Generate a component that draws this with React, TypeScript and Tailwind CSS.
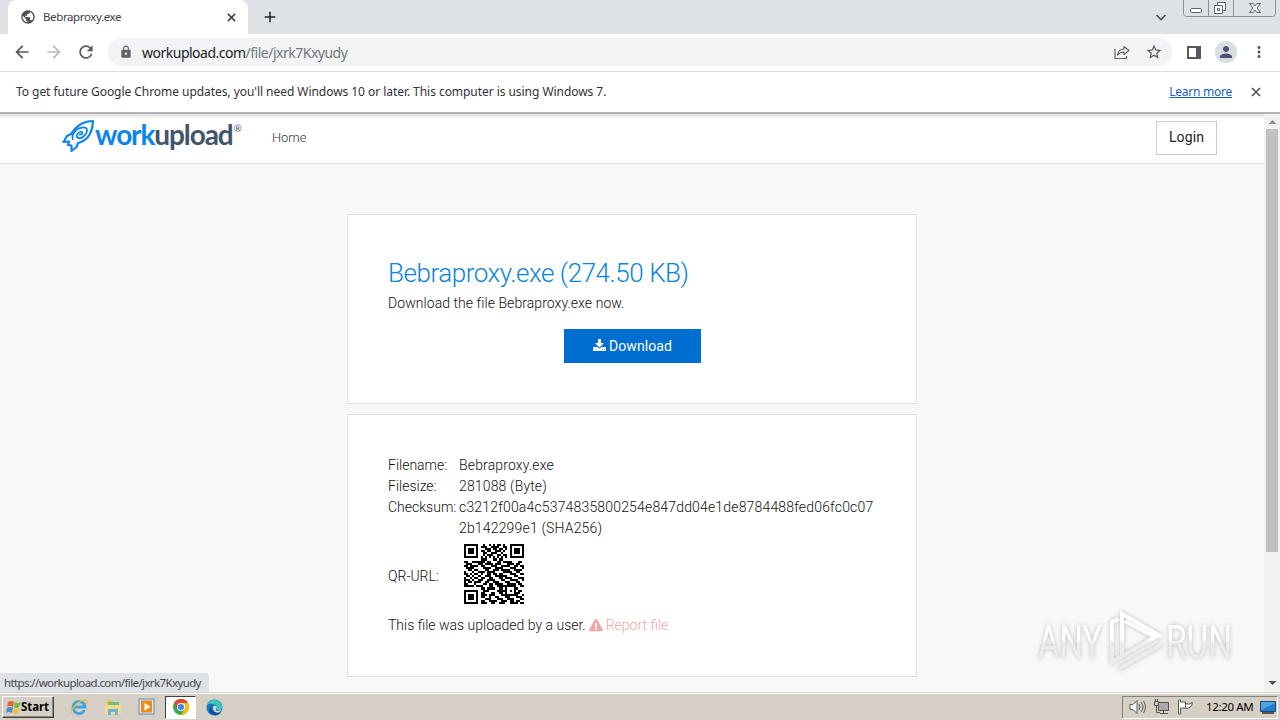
import type { ReactNode } from "react";
import {
  MdAdd,
  MdArrowBack,
  MdArrowForward,
  MdLock,
  MdMoreVert,
  MdPerson,
  MdPublic,
  MdRefresh,
  MdStarBorder,
} from "react-icons/md";
import { FaExclamationTriangle } from "react-icons/fa";

const URL_HOST = "workupload.com";
const URL_PATH = "/file/jxrk7Kxyudy";

const QR_ROWS = [
  "11111110010010101101001111111",
  "10000010111001111001101000001",
  "10111010001110110110101011101",
  "10111010110110011101001011101",
  "10111010011001110010001011101",
  "10000010010111001101101000001",
  "11111110101010101010101111111",
  "00000000111000110110000000000",
  "11001111110110001101111000110",
  "01110001101111011100011101100",
  "11011110110001110011110011011",
  "01111000011110011110001110001",
  "00110110001100111011110011110",
  "10001001110111100001111001100",
  "11010110100110110110001110011",
  "01101001001110011111100011000",
  "10010110110011000110111000111",
  "11101001100111100011001111001",
  "10110111001100111000110001100",
  "11000100011011011110011110110",
  "11111011100011001111111110011",
  "00000000110111100110100011000",
  "11111110011100001111101010110",
  "10000010110001100110100011100",
  "10111010111011100011111111001",
  "10111010110010011000110001110",
  "10111010001110001110011100011",
  "10000010110011110011101101100",
  "11111110111001100111001111011",
];

function QrCode() {
  return (
    <svg viewBox="0 0 29 29" className="mb-[7px] ml-[5px] h-[60px] w-[60px]" shapeRendering="crispEdges">
      {QR_ROWS.map((row, y) =>
        row.split("").map((cell, x) =>
          cell === "1" ? <rect key={`${x}-${y}`} x={x} y={y} width="1" height="1" /> : null
        )
      )}
    </svg>
  );
}

function CloseIcon({ className }: { className: string }) {
  return (
    <svg viewBox="0 0 10 10" className={className} stroke="currentColor" strokeWidth="1.7">
      <path d="M1 1l8 8M9 1L1 9" />
    </svg>
  );
}

function WindowControls() {
  return (
    <svg className="mr-[3px] h-[17px] w-[94px] self-start" viewBox="0 0 94 17" fill="none">
      <path d="M.5 0v13.5q0 3 3 3h86q3 0 3-3V0M25.5 0v16M50.5 0v16" stroke="#8b9099" />
      <rect x="7.5" y="8.5" width="11" height="4" rx="1" fill="#fff" stroke="#5d626b" />
      <path d="M34.5 2.5h8v8h-8z" fill="#fff" stroke="#5d626b" />
      <path d="M31.5 5.5h8v8h-8z" fill="#fff" stroke="#5d626b" />
      <path d="M34.5 8.5h2v2h-2z" stroke="#5d626b" />
      <path
        d="M66.500 3.500h3.500l2 2.500 2-2.500h3.500l-3.500 4.500 3.500 4.500H74l-2-2.500-2 2.500h-3.500L70 8z"
        fill="#fff"
        stroke="#5d626b"
      />
    </svg>
  );
}

function TabStrip() {
  return (
    <div className="flex h-[34px] items-center bg-[#dee1e6]">
      <div className="ml-2 flex h-full w-60 items-center rounded-t-lg bg-white pr-3 pl-3">
        <MdPublic className="h-4 w-4 text-[#4d5156]" />
        <span className="ml-[7px] flex-1 text-[11.5px] tracking-[-0.38px] text-[#3c4043]">
          Bebraproxy.exe
        </span>
        <CloseIcon className="h-[9px] w-[9px] text-[#3c4043]" />
      </div>
      <MdAdd className="ml-[13px] h-[18px] w-[18px] text-[#202124]" />
      <svg className="mr-4 ml-auto h-2.5 w-3" viewBox="0 0 12 10" fill="none">
        <path d="M1.5 3 6 7.5 10.5 3" stroke="#4d5156" strokeWidth="1.7" />
      </svg>
      <WindowControls />
    </div>
  );
}

function Toolbar() {
  return (
    <div className="flex h-[38px] items-center border-b border-[#dadce0] bg-white pb-px">
      <MdArrowBack className="ml-3 h-5 w-5 text-[#55585c]" />
      <MdArrowForward className="ml-3 h-5 w-5 text-[#b8babd]" />
      <MdRefresh className="ml-3 h-5 w-5 text-[#55585c]" />
      <div className="ml-3 flex h-7 w-[1064px] items-center rounded-full bg-[#f1f3f4] pr-[9px] pl-[11px]">
        <MdLock className="h-3.5 w-3.5 text-[#5f6368]" />
        <span className="ml-[9px] flex-1 text-[14px] tracking-[-0.5px] text-[#202124]">
          {URL_HOST}
          <span className="text-[#74787d]">{URL_PATH}</span>
        </span>
        <svg className="mr-[15px] h-4 w-4" viewBox="0 0 16 16" fill="none" stroke="#5f6368" strokeWidth="1.2">
          <path d="M1 5v9.500h11.500V12" />
          <path d="M10 2.500 15 6.500 10 10.500V8Q6 8 3.500 11 4 5.500 10 5z" strokeLinejoin="round" />
        </svg>
        <MdStarBorder className="h-[18px] w-[18px] text-[#55585c]" />
      </div>
      <svg className="ml-[15px] h-[13px] w-3.5" viewBox="0 0 14 13">
        <path d="M1 1h12v11H1z" fill="#fff" stroke="#55585c" strokeWidth="2" />
        <path d="M9 0h5v13H9z" fill="#55585c" />
      </svg>
      <div className="ml-3.5 flex h-[22px] w-[22px] items-center justify-center rounded-full bg-[#dadde2]">
        <MdPerson className="h-[18px] w-[18px] text-[#4a5574]" />
      </div>
      <MdMoreVert className="ml-3 h-[18px] w-5 text-[#55585c]" />
    </div>
  );
}

function UpdateBar() {
  return (
    <div className="flex h-10 items-center bg-white pr-[19px] pl-4 text-[12px] text-[#303236]">
      <span className="flex-1 tracking-[-0.05px]">
        To get future Google Chrome updates, you'll need Windows 10 or later. This computer is using Windows 7.
      </span>
      <a className="tracking-[-0.25px] text-[#1a5fc8] underline">Learn more</a>
      <CloseIcon className="ml-[19px] h-2.5 w-2.5 text-[#55585c]" />
    </div>
  );
}

function Logo() {
  return (
    <div className="flex items-center pb-1">
      <svg className="h-[34px] w-[33px]" viewBox="0 0 33 34" fill="none" stroke="#0b84ee" strokeWidth="2.2">
        <path
          d="M31 2Q20 2 13 10L9 15 5 17 1.500 23 7 22.500 6 26 9.500 26.500V32L14.500 28 16 24Q24 22 28 15 31 9 31 2Z"
          strokeLinejoin="round"
        />
        <path d="M11 21Q9 16 14 11 20 7 24 9 27 12 22 17 18 21 15 18 14 15 18 13 21 12 20 15L17 16" strokeWidth="1.8" />
      </svg>
      <div className="flex pb-1 font-[Lato] text-[28px] leading-[32px] font-bold tracking-[-1.1px] text-[#0b84ee]">
        work<span className="text-[#41566a]">upload</span>
      </div>
      <span className="mb-3.5 ml-px font-[Lato] text-[10px] text-[#41566a]">®</span>
    </div>
  );
}

function SiteHeader() {
  return (
    <header className="flex h-[50px] items-center border-b border-[#ddd] bg-linear-to-b from-[#dcdcdc] to-white to-[5px] pr-[47px] pb-[2px] pl-[62px]">
      <div className="w-[210px]">
        <Logo />
      </div>
      <a className="flex-1 text-[13px] font-light tracking-[-0.1px] text-[#333]">Home</a>
      <button className="h-[34px] w-[61px] border border-[#ccc] bg-white text-[14px] tracking-[0.1px] text-[#222]">
        Login
      </button>
    </header>
  );
}

function DownloadIcon() {
  return (
    <svg viewBox="0 0 1664 1664" className="mb-px h-[13px] w-[13px]" fill="currentColor">
      <path d="M1280 1344q0-26-19-45t-45-19-45 19-19 45 19 45 45 19 45-19 19-45zm256 0q0-26-19-45t-45-19-45 19-19 45 19 45 45 19 45-19 19-45zm128-224v320q0 40-28 68t-68 28H96q-40 0-68-28t-28-68v-320q0-40 28-68t68-28h465l135 136q58 56 136 56t136-56l136-136h464q40 0 68 28t28 68zm-325-569q17 41-14 70l-448 448q-18 19-45 19t-45-19L339 621q-31-29-14-70 17-39 59-39h256V64q0-26 19-45t45-19h256q26 0 45 19t19 45v448h256q42 0 59 39z" />
    </svg>
  );
}

function Card({ children }: { children: ReactNode }) {
  return <section className="w-[570px] border border-[#e0e0e0] bg-white px-10">{children}</section>;
}

function FileRow({ label, children }: { label: string; children: ReactNode }) {
  return (
    <tr>
      <td className="w-[71px] whitespace-nowrap">{label}</td>
      <td className="tracking-[0.15px]">{children}</td>
    </tr>
  );
}

function Watermark() {
  return (
    <svg
      className="absolute right-[25px] bottom-5 h-[70px] w-[205px] drop-shadow-[0_0_2px_#bbb]"
      viewBox="0 0 205 70"
      fill="url(#mark)"
    >
      <defs>
        <linearGradient id="mark" gradientUnits="userSpaceOnUse" x1="0" y1="20" x2="0" y2="58">
          <stop offset="0.45" stopColor="#fff" />
          <stop offset="0.55" stopColor="#ececec" />
        </linearGradient>
      </defs>
      <g fontFamily="Roboto" fontSize="47">
        <text x="4" y="56" textLength="64" lengthAdjust="spacingAndGlyphs">
          ANY
        </text>
        <text x="132" y="56" textLength="66" lengthAdjust="spacingAndGlyphs">
          RUN
        </text>
      </g>
      <g fill="none" stroke="url(#mark)" strokeWidth="4">
        <path d="M88 53V12L128 35" />
        <path d="M85 17 78 20V60L121 35 91 19" />
        <path d="M85 67 128 42" />
      </g>
    </svg>
  );
}

function FilePage() {
  return (
    <main className="relative flex flex-1 flex-col overflow-hidden bg-[#f8f8f8] font-[Roboto]">
      <SiteHeader />
      <div className="mt-[50px] flex flex-col items-center gap-2.5 text-[14px] leading-[21px] font-light text-[#111]">
        <Card>
          <div className="flex h-[188px] flex-col pt-[43px]">
            <h1 className="text-[26px] leading-[30px] tracking-[-0.46px] text-[#0a84e0]">
              Bebraproxy.exe (274.50 KB)
            </h1>
            <p className="mt-[5px] tracking-[0.06px]">Download the file Bebraproxy.exe now.</p>
            <button className="mt-[15px] ml-44 flex h-[34px] w-[137px] items-center justify-center gap-[3px] bg-[#006dd0] text-white">
              <DownloadIcon />
              <span className="font-normal tracking-[0.1px]">Download</span>
            </button>
          </div>
        </Card>
        <Card>
          <div className="h-[261px] pt-10">
            <table className="w-[488px]">
              <tbody>
                <FileRow label="Filename:">Bebraproxy.exe</FileRow>
                <FileRow label="Filesize:">281088 (Byte)</FileRow>
                <tr className="align-top">
                  <td>Checksum:</td>
                  <td className="tracking-[0.17px] whitespace-nowrap">
                    c3212f00a4c5374835800254e847dd04e1de8784488fed06fc0c07
                    <br />
                    2b142299e1 (SHA256)
                  </td>
                </tr>
                <tr className="h-[76px]">
                  <td className="pb-0.5">QR-URL:</td>
                  <td>
                    <QrCode />
                  </td>
                </tr>
              </tbody>
            </table>
            <p className="flex items-center">
              This file was uploaded by a user.
              <a className="ml-[3px] flex items-center gap-[3px] text-[#f6a5a5]">
                <FaExclamationTriangle className="mb-0.5 h-3.5 w-3.5" /> Report file
              </a>
            </p>
          </div>
        </Card>
      </div>
      <Watermark />
      <div className="absolute bottom-0 left-0 h-[19px] w-[209px] rounded-tr bg-[#dee1e6] pl-1 font-['Noto_Sans'] text-[11.5px] leading-[19px] tracking-[-0.62px] whitespace-nowrap text-[#45484c]">
        https://{URL_HOST}
        {URL_PATH}
      </div>
    </main>
  );
}

function Scrollbar() {
  return (
    <div className="flex w-4 flex-col items-center bg-[#f1f1f1]">
      <svg className="h-[15px] w-[15px]" viewBox="0 0 15 15">
        <path d="M3.5 10 7.5 6l4 4z" fill="#909090" />
      </svg>
      <div className="h-[423px] w-3 bg-[#c1c1c1]" />
      <svg className="mt-auto mb-0.5 h-[15px] w-[15px]" viewBox="0 0 15 15">
        <path d="M3.5 6h8l-4 4z" fill="#505050" />
      </svg>
    </div>
  );
}

function TaskbarIcons() {
  return (
    <div className="flex items-center">
      <svg className="ml-4 h-[18px] w-[18px]" viewBox="0 0 18 18" fill="none">
        <path d="M14.500 12A6 6 0 1 1 15 9H4" stroke="#3ba5df" strokeWidth="2.8" />
        <path d="M2 15C-1 12 10 1 16 2q2 1 0 4" stroke="#e8bd48" strokeWidth="1.4" />
      </svg>
      <svg className="ml-4 h-[18px] w-[18px]" viewBox="0 0 18 18">
        <path d="M2 2h6l1 2h6v12H2z" fill="#edc95d" />
        <path d="M4 4h11v5H4z" fill="#76b887" />
        <path d="M1 7h16v9H1z" fill="#f4de8d" />
        <path d="M4 17v-6h10v6h-3v-3H7v3z" fill="#69b4dc" />
      </svg>
      <svg className="ml-4 h-[18px] w-[18px]" viewBox="0 0 18 18">
        <rect x="1" y="1" width="15" height="15" fill="#d5e7f6" stroke="#5e91bd" />
        <rect x="3" y="2.5" width="11" height="12" fill="#f28a16" />
        <path d="M6.5 5v7.500l6-3.700z" fill="#fff" />
      </svg>
      <div className="ml-[9px] flex h-[23px] w-[31px] items-center justify-center border border-t-[#404040] border-r-white border-b-white border-l-[#404040] bg-white">
        <svg className="h-4 w-4" viewBox="0 0 16 16">
          <circle cx="8" cy="8" r="8" fill="#34a853" />
          <path d="M8 8 1.070 4A8 8 0 0 1 14.930 4H8z" fill="#ea4335" />
          <path d="M1.070 4 5 10.500 8 8V4z" fill="#ea4335" />
          <path d="M8 4h6.930A8 8 0 0 1 8 16l3.500-6z" fill="#fbbc04" />
          <circle cx="8" cy="8" r="4" fill="#fff" />
          <circle cx="8" cy="8" r="3.1" fill="#4285f4" />
        </svg>
      </div>
      <svg className="ml-2.5 h-[17px] w-[17px]" viewBox="0 0 17 17">
        <circle cx="8.5" cy="8.5" r="8" fill="#147bc5" />
        <path d="M1 6Q4 0 10 1q7 1 6.500 8-1 3-6 2 2-5-3-6Q3 4 1 6" fill="#3ac5bd" />
        <path d="M6 6q-3 7 8 8-4 4-8 1Q0 11 6 6" fill="#0b4c95" />
        <path d="M7 8q2-3 4 0-2 3 0 4l5-1q-5 5-8 1-2-2-1-4" fill="#d6cfc6" />
      </svg>
    </div>
  );
}

function Taskbar() {
  return (
    <footer className="flex h-7 items-center border-t border-[#d6cfc6] bg-[#d6cfc6] pt-px shadow-[inset_0_1px_0_#fff]">
      <button className="ml-0.5 flex h-[22px] w-[52px] items-center border border-t-white border-r-[#404040] border-b-[#404040] border-l-white pl-0.5 shadow-[inset_-1px_-1px_0_#8d8880]">
        <svg className="h-[15px] w-4" viewBox="0 0 16 15">
          <path d="M3 2q3-2 6 0L8 7Q5 5 2 7z" fill="#e46635" />
          <path d="M10 2q3 2 6 0l-2 5q-2 2-5 0z" fill="#75b947" />
          <path d="M2 8q3-2 6 0l-1 5q-3-2-6 0z" fill="#3f8ed1" />
          <path d="M9 8q3 2 5 0l-1 5q-3 2-5 0z" fill="#f2be35" />
        </svg>
        <span className="text-[11.5px] font-bold tracking-[-0.1px] text-black">Start</span>
      </button>
      <TaskbarIcons />
      <div className="mr-0.5 ml-auto flex h-[23px] w-[156px] items-center border border-t-[#85817b] border-r-white border-b-white border-l-[#85817b] pl-1.5">
        <svg className="h-4 w-[17px]" viewBox="0 0 17 16" fill="none" stroke="#5a5a5a">
          <path d="M1 5.500h3l4-4v13l-4-4H1z" fill="#fff" />
          <path d="M10 5q2 3 0 6M12 3q4 5 0 10M14.500 2q4 6 0 12" />
        </svg>
        <svg className="ml-[7px] h-4 w-4" viewBox="0 0 16 16" fill="none" stroke="#555">
          <path d="M5.5 3.5h10v8h-10z" fill="#aaa" />
          <path d="M7 14.500h8M10.500 12v2M1.500 2.500h4v4h-4zM2.500 0v2M4.500 0v2M3.500 7v6.500H7" />
        </svg>
        <svg className="ml-2 h-4 w-4" viewBox="0 0 16 16" fill="#fff" stroke="#555">
          <path d="M1.500 1v14h2V9h5V3h-5V1zM8.500 4.500q3 2 7-1-1 6-7 6" />
        </svg>
        <span className="ml-[13px] text-[11.5px] tracking-[-0.35px] whitespace-nowrap text-black">
          12:20 AM
        </span>
        <svg className="ml-[7px] h-[13px] w-4" viewBox="0 0 16 13">
          <path d="M.5.5h15v10H.5z" fill="#247bd1" stroke="#27466c" />
          <path d="M1 9 15 2V1H1z" fill="#4ba4e5" />
          <path d="M2 11h12v2H2z" fill="#555" />
        </svg>
      </div>
    </footer>
  );
}

export default function App() {
  return (
    <div className="flex h-[720px] w-[1280px] flex-col overflow-hidden bg-white font-['Noto_Sans']">
      <TabStrip />
      <Toolbar />
      <UpdateBar />
      <div className="h-0.5 bg-[#b4b4b4]" />
      <div className="flex h-[578px]">
        <FilePage />
        <Scrollbar />
      </div>
      <Taskbar />
    </div>
  );
}
